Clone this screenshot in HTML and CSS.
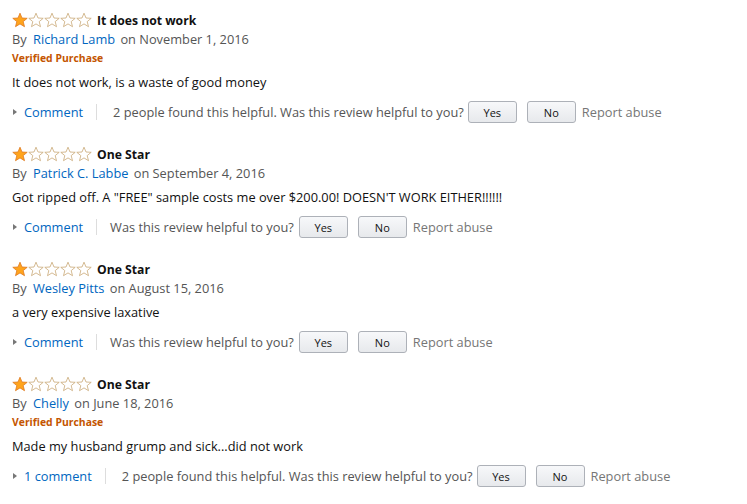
FILE: index.html
```html
<!DOCTYPE html>
<html>
<head>
<meta charset="utf-8">
<link rel="stylesheet" href="styles.css">
</head>
<body>
<svg width="0" height="0" class="defs">
  <defs>
    <path id="star" d="M8 1.2 L10 6 L15.2 6.3 L11.2 9.6 L12.5 14.7 L8 11.9 L3.5 14.7 L4.8 9.6 L0.8 6.3 L6 6 Z"/>
  </defs>
</svg>
<div class="reviews">
  <div class="review">
    <div class="title-row">
      <svg class="stars" width="80" height="16" viewBox="0 0 80 16">
        <use href="#star" class="full"/>
        <use href="#star" x="16" class="empty"/>
        <use href="#star" x="32" class="empty"/>
        <use href="#star" x="48" class="empty"/>
        <use href="#star" x="64" class="empty"/>
      </svg>
      <span class="title">It does not work</span>
    </div>
    <div class="byline">By <a class="link author">Richard Lamb</a> on November 1, 2016</div>
    <div class="verified">Verified Purchase</div>
    <div class="text">It does not work, is a waste of good money</div>
    <div class="actions">
      <span class="caret"></span><a class="link">Comment</a>
      <span class="sep"></span>
      <span class="helpful count">2 people found this helpful. Was this review helpful to you?</span>
      <button class="btn">Yes</button>
      <button class="btn">No</button>
      <span class="report">Report abuse</span>
    </div>
  </div>

  <div class="review">
    <div class="title-row">
      <svg class="stars" width="80" height="16" viewBox="0 0 80 16">
        <use href="#star" class="full"/>
        <use href="#star" x="16" class="empty"/>
        <use href="#star" x="32" class="empty"/>
        <use href="#star" x="48" class="empty"/>
        <use href="#star" x="64" class="empty"/>
      </svg>
      <span class="title">One Star</span>
    </div>
    <div class="byline">By <a class="link author">Patrick C. Labbe</a> on September 4, 2016</div>
    <div class="text">Got ripped off. A "FREE" sample costs me over $200.00! DOESN'T WORK EITHER!!!!!!</div>
    <div class="actions">
      <span class="caret"></span><a class="link">Comment</a>
      <span class="sep"></span>
      <span class="helpful">Was this review helpful to you?</span>
      <button class="btn">Yes</button>
      <button class="btn">No</button>
      <span class="report">Report abuse</span>
    </div>
  </div>

  <div class="review">
    <div class="title-row">
      <svg class="stars" width="80" height="16" viewBox="0 0 80 16">
        <use href="#star" class="full"/>
        <use href="#star" x="16" class="empty"/>
        <use href="#star" x="32" class="empty"/>
        <use href="#star" x="48" class="empty"/>
        <use href="#star" x="64" class="empty"/>
      </svg>
      <span class="title">One Star</span>
    </div>
    <div class="byline">By <a class="link author">Wesley Pitts</a> on August 15, 2016</div>
    <div class="text">a very expensive laxative</div>
    <div class="actions">
      <span class="caret"></span><a class="link">Comment</a>
      <span class="sep"></span>
      <span class="helpful">Was this review helpful to you?</span>
      <button class="btn">Yes</button>
      <button class="btn">No</button>
      <span class="report">Report abuse</span>
    </div>
  </div>

  <div class="review">
    <div class="title-row">
      <svg class="stars" width="80" height="16" viewBox="0 0 80 16">
        <use href="#star" class="full"/>
        <use href="#star" x="16" class="empty"/>
        <use href="#star" x="32" class="empty"/>
        <use href="#star" x="48" class="empty"/>
        <use href="#star" x="64" class="empty"/>
      </svg>
      <span class="title">One Star</span>
    </div>
    <div class="byline">By <a class="link author">Chelly</a> on June 18, 2016</div>
    <div class="verified">Verified Purchase</div>
    <div class="text">Made my husband grump and sick...did not work</div>
    <div class="actions">
      <span class="caret"></span><a class="link">1 comment</a>
      <span class="sep"></span>
      <span class="helpful count">2 people found this helpful. Was this review helpful to you?</span>
      <button class="btn">Yes</button>
      <button class="btn">No</button>
      <span class="report">Report abuse</span>
    </div>
  </div>
</div>
</body>
</html>
```

FILE: styles.css
```css
html, body {
  margin: 0;
  padding: 0;
  background: #fff;
}
body {
  font-family: "Open Sans", "Noto Sans", Arial, sans-serif;
  font-size: 12.8px;
  color: #111;
}
.defs {
  position: absolute;
}
.reviews {
  padding: 10px 12px 0 12px;
  display: flex;
  flex-direction: column;
  gap: 21px;
}
.review {
  display: flex;
  flex-direction: column;
}
.title-row {
  height: 20px;
  display: flex;
  align-items: center;
  gap: 5px;
}
.stars {
  display: block;
}
.stars .full {
  fill: #ffa41c;
  stroke: #de7921;
  stroke-width: 0.8;
}
.stars .empty {
  fill: #fff;
  stroke: #c9a876;
  stroke-width: 0.8;
}
.title {
  font-weight: 700;
  font-size: 12.2px;
  color: #111;
}
.byline {
  height: 19px;
  line-height: 19px;
  color: #555;
}
.link {
  color: #0066c0;
  text-decoration: none;
}
.author {
  margin: 0 2px 0 3px;
}
.verified {
  height: 19px;
  line-height: 19px;
  font-size: 10.4px;
  font-weight: 700;
  color: #c45500;
}
.text {
  margin-top: 5px;
  height: 19px;
  line-height: 19px;
  color: #111;
}
.actions {
  margin-top: 9px;
  height: 22px;
  display: flex;
  align-items: center;
  color: #555;
}
.caret {
  width: 0;
  height: 0;
  border-top: 3px solid transparent;
  border-bottom: 3px solid transparent;
  border-left: 4px solid #777;
  margin: 0 7px 0 1px;
}
.sep {
  width: 1px;
  height: 16px;
  background: #ddd;
  margin: 0 13px 0 13px;
}
.helpful {
  color: #555;
  margin-right: 5px;
}
.helpful.count {
  margin-left: 3px;
  margin-right: 4px;
}
.btn {
  width: 49px;
  height: 22px;
  margin: 0 10px 0 0;
  padding: 0;
  border: 1px solid #adb1b8;
  border-radius: 3px;
  background: linear-gradient(#f7f8fa, #e7e9ec);
  font-family: inherit;
  font-size: 11px;
  color: #111;
}
.btn + .btn {
  margin-right: 6px;
}
.report {
  color: #767676;
}
```
